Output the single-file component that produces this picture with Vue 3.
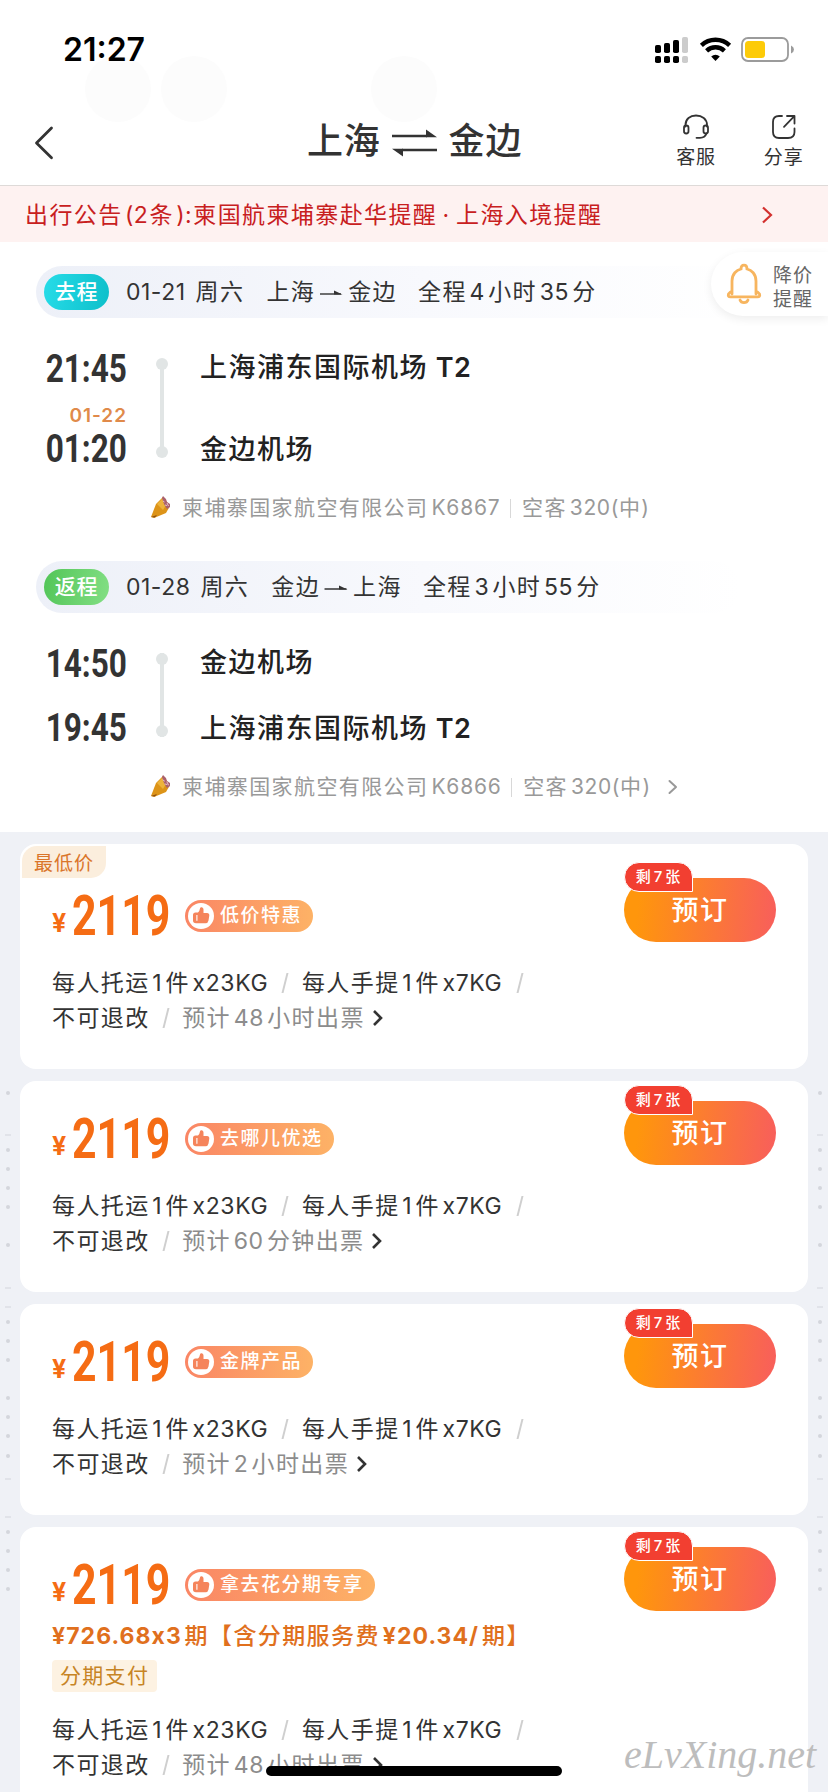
<script setup>
import { h } from 'vue'

// Splits mixed text so that latin/digit runs get their own spacing beside CJK characters.
const Mixed = (props) =>
  h(
    'span',
    { class: 'mixed' },
    props.text
      .split(/([\x21-\x7e¥]+)/)
      .filter(Boolean)
      .map((t) => (/^[\x21-\x7e¥]/.test(t) ? h('span', { class: 'latin' }, t) : t))
  )
Mixed.props = ['text']

const segments = [
  {
    tag: '去程', kind: 'go', date: '01-21', day: '周六', from: '上海', to: '金边', total: '全程4小时35分',
    dep: '21:45', arr: '01:20', next: '01-22', depAt: '上海浦东国际机场', depT: 'T2', arrAt: '金边机场', arrT: '',
    flight: '柬埔寨国家航空有限公司K6867', plane: '空客320(中)', more: false
  },
  {
    tag: '返程', kind: 'back', date: '01-28', day: '周六', from: '金边', to: '上海', total: '全程3小时55分',
    dep: '14:50', arr: '19:45', next: '', depAt: '金边机场', depT: '', arrAt: '上海浦东国际机场', arrT: 'T2',
    flight: '柬埔寨国家航空有限公司K6866', plane: '空客320(中)', more: true
  }
]

const offers = [
  { label: '低价特惠', lead: '预计48小时出票', best: true },
  { label: '去哪儿优选', lead: '预计60分钟出票' },
  { label: '金牌产品', lead: '预计2小时出票' },
  { label: '拿去花分期专享', lead: '预计48小时出票', plan: true }
]

const dots = [1093, 1150, 1169, 1188, 1207, 1245, 1322, 1341, 1360, 1398, 1417, 1436, 1456, 1532, 1551, 1570, 1589]
const dashes = [1135, 1288, 1307, 1479, 1517]
</script>

<template>
  <div class="screen">
    <i class="ghost g1"></i><i class="ghost g2"></i><i class="ghost g3"></i>

    <div class="status">
      <span class="clock">21:27</span>
      <svg class="status-icons" width="142" height="28" viewBox="0 0 142 28">
        <g>
          <rect x="0" y="9" width="6" height="8" rx="1.8" /><rect x="9" y="7" width="6" height="10" rx="1.8" />
          <rect x="18" y="4" width="6" height="13" rx="1.8" /><rect x="27" y="1" width="6" height="16" rx="1.8" fill="#ccc" />
          <rect x="0" y="20" width="6" height="7" rx="1.8" /><rect x="9" y="20" width="6" height="7" rx="1.8" />
          <rect x="18" y="20" width="6" height="7" rx="1.8" /><rect x="27" y="20" width="6" height="7" rx="1.8" fill="#ccc" />
        </g>
        <g fill="none" stroke="#000" stroke-width="4.4">
          <path d="M46.4 9.3a20.5 20.5 0 0 1 28.2 0" /><path d="M51.6 14.8a13 13 0 0 1 17.8 0" />
        </g>
        <path d="M60.500 25 56.200 20.400a6.500 6.500 0 0 1 8.600 0z" />
        <rect x="87" y="2" width="46" height="23" rx="6" fill="#fff" stroke="#9b9b9b" stroke-width="1.8" />
        <rect x="90" y="5" width="20" height="17" rx="3.500" fill="#fdcb08" />
        <path d="M136 9.500q3 1.500 3 4t-3 4z" fill="#9b9b9b" />
      </svg>
    </div>

    <header class="head">
      <svg class="back" width="20" height="34" viewBox="0 0 20 34"><path d="M17.500 2 2.500 17l15 14.800" /></svg>
      <h1 class="title">
        <span>上海</span>
        <svg width="47" height="30" viewBox="0 0 47 30">
          <path d="M1 9h35M11 23h35" stroke="#333" stroke-width="2.400" fill="none" />
          <path d="M35 2.500 46 10.200H35zM12 29.500 1 21.800h11z" fill="#333" />
        </svg>
        <span>金边</span>
      </h1>
      <div class="tool service">
        <svg width="28" height="28" viewBox="0 0 28 28">
          <path d="M3.500 13.500v-1.500C3.500 6 8 2.500 14 2.500S25 6 25 12v1.500" />
          <rect x="2" y="12.500" width="4.500" height="8" rx="2.250" /><rect x="21.500" y="12.500" width="4.500" height="8" rx="2.250" />
          <path d="M24.500 20.500q-1.500 4.300-6.500 4.300h-3.500" />
        </svg>
        <span>客服</span>
      </div>
      <div class="tool share">
        <svg width="28" height="28" viewBox="0 0 28 28">
          <path d="M12 3H9Q3 3 3 9v10q0 6 6 6h9q6.500 0 6.500-6v-3.500" /><path d="M17 3h7.500v7.500M24.300 3.200 14 13.800" />
        </svg>
        <span>分享</span>
      </div>
    </header>

    <div class="notice">
      <Mixed text="出行公告(2条):柬国航柬埔寨赴华提醒 · 上海入境提醒" />
      <svg width="12" height="18" viewBox="0 0 12 18"><path d="M2 1.500 10 9l-8 7.500" /></svg>
    </div>

    <main class="trip">
      <section v-for="s in segments" :key="s.tag" class="segment" :class="s.kind">
        <div class="bar">
          <span class="pill">{{ s.tag }}</span>
          <span class="date">{{ s.date }}</span>
          <span class="day">{{ s.day }}</span>
          <span>{{ s.from }}</span>
          <svg width="24" height="12" viewBox="0 0 24 12"><path d="M1 8h21" stroke="#333" stroke-width="1.400" /><path d="M15 4.500 23.500 8.500H15z" fill="#333" /></svg>
          <span class="dest">{{ s.to }}</span>
          <Mixed :text="s.total" />
        </div>
        <div class="route">
          <div class="times">
            <span class="time"><b>{{ s.dep }}</b></span>
            <span v-if="s.next" class="next">{{ s.next }}</span>
            <span class="time"><b>{{ s.arr }}</b></span>
          </div>
          <div class="track"><i></i><i></i></div>
          <div class="ports">
            <span>{{ s.depAt }} <b>{{ s.depT }}</b></span>
            <span>{{ s.arrAt }} <b>{{ s.arrT }}</b></span>
          </div>
        </div>
        <div class="airline">
          <svg class="logo" width="22" height="24" viewBox="0 0 22 24">
            <path d="M1 22 6 9 13 2l7 9-4 7-12 5z" fill="#dd9418" />
            <path d="M7 9l6-6 3 7-3 5z" fill="#edb33b" />
            <path d="M12 3l1-2 3 3 1 3 3 2v3l-3 2-3-5z" fill="#a9606d" />
            <path d="M13 6l1.500 1M15 10l2 .5M17 8l1.500 3" stroke="#e6c2cc" stroke-width="1" />
            <path d="M1 22l6-2-2 2.500z" fill="#8a4d12" />
          </svg>
          <Mixed :text="s.flight" />
          <i class="rule"></i>
          <Mixed class="plane" :text="s.plane" />
          <svg v-if="s.more" class="chev" width="10" height="16" viewBox="0 0 10 16"><path d="M1.500 2 8 8l-6.500 6" /></svg>
        </div>
      </section>

      <aside class="alert">
        <svg width="36" height="42" viewBox="0 0 36 42">
          <path d="M6 31V18C6 11 10.500 7 15 6q0-3.800 3-3.800T21 6c4.500 1 9 5 9 12v13" />
          <path d="M4.500 29 2.500 31q-1 2.800 2 2.800h27q3 0 2-2.800l-2-2" /><path d="M14 37q1 2.600 4 2.600t4-2.600" />
        </svg>
        <span>降价<br />提醒</span>
      </aside>
    </main>

    <div class="offers">
      <article v-for="o in offers" :key="o.label" class="card" :class="{ best: o.best }">
        <span v-if="o.best" class="corner">最低价</span>
        <div class="price-row">
          <span class="yen">¥</span>
          <span class="amount"><b>2119</b></span>
          <span class="badge">
            <svg width="26" height="26" viewBox="0 0 26 26">
              <circle cx="13" cy="13" r="13" fill="#fff" />
              <path d="M5 12q0-2.500 2.500-2.500h2.500q1.500-1 2-4 .2-1.500 1.800-1.300 1.700.3 1.700 2.300v3.500h3.500q2.500 0 2.300 2.500l-.8 5q-.5 2.700-3 2.700h-9.500Q5 20.200 5 17.500z" fill="#f5845b" />
              <path d="M8.900 12v5.800" stroke="#fff" stroke-width="1.100" />
            </svg>
            <span>{{ o.label }}</span>
          </span>
        </div>
        <template v-if="o.plan">
          <div class="plan"><Mixed text="¥726.68x3期【含分期服务费¥20.34/期】" /></div>
          <div class="chips"><span class="chip">分期支付</span></div>
        </template>
        <p class="rules">
          <Mixed text="每人托运1件x23KG" /><i class="slash"></i><Mixed text="每人手提1件x7KG" /><i class="slash"></i>
        </p>
        <p class="rules">
          <span>不可退改</span><i class="slash"></i><Mixed class="soft" :text="o.lead" />
          <svg width="11" height="18" viewBox="0 0 11 18"><path d="M2 2 9 9l-7 7" /></svg>
        </p>
        <div class="book">
          <span>预订</span>
          <em><Mixed text="剩7张" /></em>
        </div>
      </article>
    </div>

    <svg class="edge" width="828" height="520" viewBox="0 1085 828 520">
      <g fill="#d4d6dc">
        <template v-for="x in [8, 820]" :key="x">
          <circle v-for="y in dots" :key="y" :cx="x" :cy="y" r="2" />
          <rect v-for="y in dashes" :key="y" :x="x - 3" :y="y - 0.5" width="6" height="1" />
        </template>
      </g>
    </svg>

    <div class="home"></div>
    <div class="mark">eLvXing.net</div>
  </div>
</template>

<style>
body { background: #fff; }
.mixed .latin { margin: 0 3.200px 0 2.700px; letter-spacing: 0.600px; }
.notice .mixed { word-spacing: -2.500px; }
.notice .mixed .latin { margin: 0 1.400px 0 2.400px; letter-spacing: 0.300px; }
.airline .mixed .latin { margin: 0 1.600px 0 3px; letter-spacing: 0.800px; }
.airline .plane .latin + .latin { margin-left: 0; }
.airline .plane .latin { margin-right: 0; letter-spacing: 0.600px; }
.plan .mixed .latin { margin: 0 2.800px 0 3px; letter-spacing: 1.050px; font-weight: 700; }
.plan .mixed .latin:first-child { margin-left: 0; }
.book .mixed .latin { margin: 0 2.500px 0 2px; }
</style>

<style scoped>
.screen {
  position: relative; width: 828px; height: 1792px; overflow: hidden; background: #fff; color: #333;
  font-family: Inter, "Noto Sans CJK SC", sans-serif; font-size: 23px; line-height: 30px; letter-spacing: 1.4px; white-space: nowrap;
}
svg { flex: none; display: block; fill: none; }
.ghost { position: absolute; top: 56px; width: 66px; height: 66px; border-radius: 50%; background: #fcfcfc; }
.g1 { left: 85px; }
.g2 { left: 161px; }
.g3 { left: 371px; }

.status { position: relative; display: flex; justify-content: space-between; align-items: center; height: 99px; padding: 0 31px 0 63px; box-sizing: border-box; }
.clock { font-size: 32px; font-weight: 600; letter-spacing: 0; color: #000; }
.status-icons { fill: #000; }

.head { position: relative; display: flex; align-items: center; height: 86px; border-bottom: 1px solid #dedad8; }
.back { margin: 1px 0 0 34px; stroke: #333; stroke-width: 2.800; stroke-linecap: round; stroke-linejoin: round; }
.title { flex: none; display: flex; align-items: center; margin: -2px 0 0 253px; font-size: 36px; font-weight: 500; letter-spacing: 0.800px; line-height: 50px; }
.title svg { margin: 2px 11px 0 10px; }
.tool { display: flex; flex-direction: column; align-items: center; gap: 3px; font-size: 19px; line-height: 28px; letter-spacing: 0.800px; }
.tool svg { stroke: #333; stroke-width: 1.800; stroke-linecap: round; stroke-linejoin: round; }
.service { margin-left: 154px; }
.share { margin-left: 48px; }

.notice { display: flex; justify-content: space-between; align-items: center; height: 56px; padding: 1px 55px 0 25px; box-sizing: border-box; background: #fef2f1; color: #c8201e; }
.notice svg { stroke: #d3302e; stroke-width: 2.200; }

.trip { position: relative; height: 590px; padding-top: 24px; box-sizing: border-box; }
.segment { height: 295px; }
.bar { display: flex; align-items: center; height: 52px; margin-left: 36px; width: 704px; padding-left: 8px; box-sizing: border-box; border-radius: 26px; line-height: 31px; background: linear-gradient(90deg, #edf0f8, #f8f9fd 55%, #fff); }
.bar > span:not(.pill) { padding-top: 1px; }
.pill { width: 65px; height: 36px; line-height: 35px; border-radius: 18px; text-align: center; font-size: 21px; letter-spacing: 0.800px; color: #fff; font-weight: 500; }
.go .pill { background: linear-gradient(100deg, #27dce8, #0dbfca); }
.back .pill { background: linear-gradient(100deg, #52c558, #83df84); }
.segment.back { margin: 0; stroke: none; }
.date { margin-left: 17px; letter-spacing: 0.500px; }
.day { margin: 0 22px 0 10px; }
.bar svg { margin: 0 5px 0 4px; }
.dest { margin-right: 21px; }

.route { display: flex; }
.times { display: flex; flex-direction: column; align-items: flex-end; width: 127px; padding-top: 31px; }
.time { display: block; height: 40px; font: 500 38px/40px Roboto, sans-serif; letter-spacing: 0; }
.time b { display: inline-block; font-weight: 700; transform: scaleX(0.830); transform-origin: right; }
.next { height: 40px; line-height: 54px; font-size: 19px; font-weight: 600; letter-spacing: 1px; color: #e08a4a; }
.track { position: relative; display: flex; flex-direction: column; justify-content: space-between; align-items: center; width: 12px; height: 100px; margin: 40px 0 0 29px; background: linear-gradient(#e1e5e5, #e1e5e5) center / 4px 90px no-repeat; }
.track i { width: 12px; height: 12px; border-radius: 50%; background: #e1e5e5; }
.ports { display: flex; flex-direction: column; justify-content: space-between; height: 122px; margin: 30px 0 0 32px; font-size: 27px; font-weight: 500; line-height: 40px; letter-spacing: 1.500px; color: #222; }
.ports b { margin-left: -1px; font-weight: 600; letter-spacing: 0.400px; }
.segment.back .times { gap: 24px; }
.segment.back .track { height: 84px; }
.segment.back .ports { height: 106px; }
.airline { display: flex; align-items: center; height: 30px; margin: 23px 0 0 150px; font-size: 21px; letter-spacing: 1.400px; color: #999; }
.segment.back .airline { margin-top: 23px; }
.logo { margin: -2px 10px 0 0; }
.rule { width: 1px; height: 19px; margin: 0 11px 0 8px; background: #d8d8d8; }
.chev { margin-left: 17px; stroke: #999; stroke-width: 2; }

.alert { position: absolute; top: 10px; right: 0; display: flex; align-items: center; width: 117px; height: 64px; padding-left: 15px; box-sizing: border-box; border-radius: 32px 0 0 32px; background: #fff; box-shadow: 0 3px 10px rgba(0, 0, 0, 0.070); font-size: 19px; line-height: 24px; letter-spacing: 1px; color: #666; }
.alert svg { margin-right: 11px; stroke: #f7b55f; stroke-width: 2.800; stroke-linecap: round; }
.alert span { padding-top: 9px; height: 48px; box-sizing: content-box; margin-top: -1px; }

.offers { display: flex; flex-direction: column; gap: 12px; min-height: 960px; padding: 12px 20px 0; background: #eff1f6; box-sizing: border-box; }
.card { position: relative; flex: none; height: 211px; padding: 34px 32px 0; box-sizing: border-box; border-radius: 16px; background: #fff; }
.card.best { height: 225px; padding-top: 48px; }
.card:last-child { height: 330px; }
.corner { position: absolute; left: 2px; top: 2px; width: 84px; height: 32px; line-height: 35px; padding-left: 12px; box-sizing: border-box; border-radius: 15px 0 15px 0; background: #fbeedd; color: #da752a; font-size: 19px; letter-spacing: 1px; }
.price-row { display: flex; align-items: center; height: 48px; color: #f56c14; }
.yen { width: 20px; font-size: 25px; font-weight: 700; line-height: 48px; padding-top: 15px; box-sizing: border-box; height: 64px; letter-spacing: 0; }
.amount { width: 113px; font-family: Roboto, sans-serif; font-size: 56px; line-height: 48px; letter-spacing: 0; }
.amount b { display: inline-block; font-weight: 700; transform: scaleX(0.765); transform-origin: left; }
.badge { display: flex; align-items: center; height: 32px; padding: 0 11px 0 3px; border-radius: 16px; background: linear-gradient(90deg, #fa8665, #fdb266); color: #fff; font-size: 19px; font-weight: 500; letter-spacing: 1.500px; }
.badge svg { margin-right: 6px; }
.plan { height: 40px; line-height: 40px; margin-top: 7px; font-weight: 500; color: #e0701d; }
.chips { display: flex; height: 32px; margin-top: 4px; }
.chip { height: 32px; line-height: 31px; padding: 0 8px; border-radius: 4px; background: #fdf2e2; color: #c78425; font-size: 21px; letter-spacing: 1.300px; }
.rules { display: flex; align-items: center; height: 35px; margin: 0; }
.price-row + .rules { margin-top: 25px; }
.chips + .rules { margin-top: 20px; }
.slash { width: 1.600px; height: 20px; margin: 0 16px 0 13px; background: #cfcfcf; transform: skewX(-14deg); }
span:not(.mixed) + .slash { margin-left: 15px; }
.soft { color: #8c8c8c; }
.rules svg { margin-left: 7px; stroke: #333; stroke-width: 2.600; }
.book { position: absolute; top: 20px; right: 32px; width: 152px; height: 64px; border-radius: 32px; background: linear-gradient(95deg, #ff960c 10%, #f85e5c); color: #fff; font-size: 27px; font-weight: 500; line-height: 65px; text-align: center; letter-spacing: 1.500px; }
.best .book { top: 34px; }
.book em { position: absolute; left: 0; top: -16px; width: 67px; height: 28px; border: 1px solid #fff; border-radius: 15px 15px 0 15px; background: #f23f31; font-style: normal; font-size: 15px; line-height: 28px; letter-spacing: 0.800px; }

.edge { position: absolute; left: 0; top: 1085px; }
.home { position: absolute; left: 266px; top: 1766px; width: 296px; height: 10px; border-radius: 5px; background: #000; }
.mark { position: absolute; left: 624px; top: 1730px; font: italic 40px/50px "Liberation Serif", serif; letter-spacing: 0; color: #bdbdbd; }
</style>
